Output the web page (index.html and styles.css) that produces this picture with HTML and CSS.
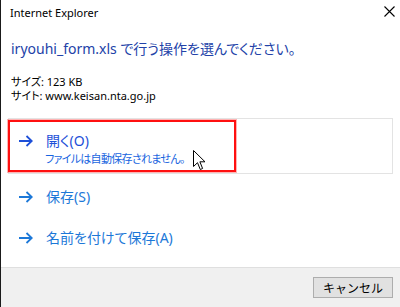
FILE: index.html
```html
<!DOCTYPE html>
<html lang="ja">
<head>
<meta charset="utf-8">
<title>Internet Explorer</title>
<link rel="stylesheet" href="styles.css">
</head>
<body>
<div class="dialog">
  <div class="titlebar">
    <span class="title">Internet Explorer</span>
    <svg class="close" width="11" height="11" viewBox="0 0 11 11">
      <path d="M0.5 0.5 L10.5 10.5 M10.5 0.5 L0.5 10.5" stroke="#000" stroke-width="1.1" fill="none"/>
    </svg>
  </div>

  <div class="content">
    <h1 class="instruction">iryouhi_form.xls で行う操作を選んでください。</h1>
    <div class="info">
      <div class="info-line">サイズ: 123 KB</div>
      <div class="info-line">サイト: www.keisan.nta.go.jp</div>
    </div>
  </div>

  <div class="options">
    <div class="option hover">
      <div class="option-main">
        <svg class="arrow" width="14" height="12" viewBox="0 0 14 12">
          <path d="M0 6 H12.5 M7.5 1 L12.8 6 L7.5 11" stroke="currentColor" stroke-width="1.8" fill="none"/>
        </svg>
        <span>開く(O)</span>
      </div>
      <div class="option-note">ファイルは自動保存されません。</div>
      <div class="mark"></div>
      <svg class="pointer" width="13" height="21" viewBox="0 0 13 21">
        <path d="M0.5 0.5 V16.5 L4.5 12.7 L7.3 19.5 L9.6 18.5 L6.9 11.8 L12 11.8 Z" fill="#fff" stroke="#000" stroke-width="1" stroke-linejoin="miter"/>
      </svg>
    </div>
    <div class="option">
      <div class="option-main">
        <svg class="arrow" width="14" height="12" viewBox="0 0 14 12">
          <path d="M0 6 H12.5 M7.5 1 L12.8 6 L7.5 11" stroke="currentColor" stroke-width="1.8" fill="none"/>
        </svg>
        <span>保存(S)</span>
      </div>
    </div>
    <div class="option">
      <div class="option-main">
        <svg class="arrow" width="14" height="12" viewBox="0 0 14 12">
          <path d="M0 6 H12.5 M7.5 1 L12.8 6 L7.5 11" stroke="currentColor" stroke-width="1.8" fill="none"/>
        </svg>
        <span>名前を付けて保存(A)</span>
      </div>
    </div>
  </div>

  <div class="footer">
    <button class="button">キャンセル</button>
  </div>
</div>
</body>
</html>
```

FILE: styles.css
```css
html, body {
  margin: 0;
  padding: 0;
  background: #fff;
}

body {
  font-family: "Noto Sans", "Noto Sans CJK JP", sans-serif;
  font-feature-settings: "palt";
  color: #000;
}

.dialog {
  width: 400px;
  height: 307px;
  box-sizing: border-box;
  border-left: 1px solid #1a1a1a;
  display: flex;
  flex-direction: column;
  background: #fff;
}

.titlebar {
  height: 24px;
  display: flex;
  align-items: center;
  justify-content: space-between;
  padding: 0 5px 0 9px;
}

.title {
  font-size: 11px;
  line-height: 15px;
}

.close {
  display: block;
  margin-top: -2px;
}

.content {
  padding: 0 0 0 10px;
}

.instruction {
  margin: 15px 0 0;
  font-size: 14px;
  line-height: 20px;
  font-weight: normal;
  color: #2242a8;
}

.info {
  margin-top: 16px;
  font-size: 11px;
}

.info-line {
  height: 14px;
  line-height: 14px;
}

.options {
  margin-top: 15px;
  padding: 0 7px;
}

.option {
  position: relative;
  border: 1px solid transparent;
  padding: 12px 0 7px 10px;
  color: #1c78d8;
}

.option.hover {
  border-color: #e3e3e3;
  padding-bottom: 6px;
  color: #1d4fd8;
}

.option-main {
  display: flex;
  align-items: center;
  gap: 13px;
  font-size: 14px;
  line-height: 20px;
}

.arrow {
  display: block;
  flex: none;
}

.option-note {
  padding-left: 26px;
  font-size: 11px;
  line-height: 16px;
  letter-spacing: -0.7px;
  color: #1764e0;
}

.mark {
  position: absolute;
  left: -1px;
  top: 1px;
  width: 228px;
  height: 52px;
  box-sizing: border-box;
  border: 2px solid #ff1010;
  box-shadow: 0 0 0 1px rgba(255, 40, 40, 0.35);
}

.pointer {
  position: absolute;
  left: 184px;
  top: 31px;
}

.footer {
  margin-top: auto;
  height: 40px;
  box-sizing: border-box;
  border-top: 1px solid #dfdfdf;
  background: #f0f0f0;
  display: flex;
  justify-content: flex-end;
  align-items: flex-start;
  padding: 9px 7px 0 0;
}

.button {
  width: 80px;
  height: 21px;
  box-sizing: border-box;
  border: 1px solid #adadad;
  background: #e1e1e1;
  font-family: "Noto Sans CJK JP", sans-serif;
  font-size: 12px;
  line-height: 17px;
  padding: 0;
  color: #000;
}
```
